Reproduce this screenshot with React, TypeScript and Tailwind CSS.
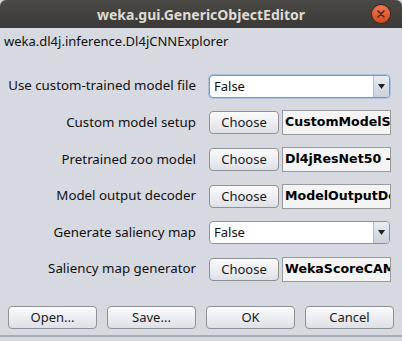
import React from 'react';

type Row =
  | { label: string; kind: 'combo'; value: string; focused?: boolean }
  | { label: string; kind: 'object'; value: string };

const ROWS: Row[] = [
  { label: 'Use custom-trained model file', kind: 'combo', value: 'False', focused: true },
  { label: 'Custom model setup', kind: 'object', value: 'CustomModelSetup' },
  { label: 'Pretrained zoo model', kind: 'object', value: 'Dl4jResNet50 -default' },
  { label: 'Model output decoder', kind: 'object', value: 'ModelOutputDecoder' },
  { label: 'Generate saliency map', kind: 'combo', value: 'False' },
  { label: 'Saliency map generator', kind: 'object', value: 'WekaScoreCAM' },
];

const uiFont = { fontFamily: '"Noto Sans", "DejaVu Sans", sans-serif' };

const Btn = ({ children, className = '' }: { children: React.ReactNode; className?: string }) => (
  <button
    type="button"
    className={`h-[23px] rounded-[4px] border border-[#8e9196] bg-gradient-to-b from-[#fbfbfc] to-[#dde0e5] text-[13px] text-[#1a1a1a] leading-none ${className}`}
  >
    {children}
  </button>
);

const Combo = ({ value, focused }: { value: string; focused?: boolean }) => (
  <div
    className={`flex h-[23px] w-[181px] items-stretch overflow-hidden rounded-[4px] border bg-white ${
      focused ? 'border-[#6f98c9] shadow-[0_0_0_1px_#a9c3e3]' : 'border-[#8e9196]'
    }`}
  >
    <div className="flex flex-1 items-center pl-[4px] text-[13px] text-[#111]">{value}</div>
    <div className="flex w-[16px] items-center justify-center border-l border-[#b8bcc2] bg-gradient-to-b from-[#e9edf2] to-[#c9d1db]">
      <svg width="7" height="5" viewBox="0 0 7 5">
        <path d="M0 0 H7 L3.5 5 Z" fill="#222" />
      </svg>
    </div>
  </div>
);

const App: React.FC = () => {
  return (
    <div className="h-[341px] w-[402px] overflow-hidden bg-[#d6d9df]" style={uiFont}>
      {/* title bar */}
      <div className="relative flex h-[28px] items-center justify-center rounded-t-[6px] bg-gradient-to-b from-[#4a4945] to-[#3b3a36]">
        <span className="text-[14px] font-bold text-[#dfdbd2]">weka.gui.GenericObjectEditor</span>
        <div className="absolute right-[12px] top-[5px] flex h-[18px] w-[18px] items-center justify-center rounded-full bg-gradient-to-b from-[#f0764a] to-[#d84a17] shadow-[0_0_0_1px_#3a2a22]">
          <svg width="8" height="8" viewBox="0 0 8 8">
            <path d="M1 1 L7 7 M7 1 L1 7" stroke="#3b2a22" strokeWidth="1.5" strokeLinecap="round" />
          </svg>
        </div>
      </div>

      <div className="px-[4px] pt-[4px] text-[13px] leading-[18px] text-[#111]">weka.dl4j.inference.Dl4jCNNExplorer</div>

      {/* properties */}
      <div className="mt-[18px] flex flex-col">
        {ROWS.map((r) => (
          <div key={r.label} className="flex h-[36.6px] items-center">
            <div className="w-[196px] text-right text-[13.3px] text-[#111]">{r.label}</div>
            <div className="ml-[13px] flex items-center">
              {r.kind === 'combo' ? (
                <Combo value={r.value} focused={r.focused} />
              ) : (
                <>
                  <Btn className="w-[70px]">Choose</Btn>
                  <div className="ml-[3px] flex h-[25px] w-[109px] items-center overflow-hidden whitespace-nowrap border border-[#9a9a9a] bg-[#f4f4f4] pl-[2px]">
                    <span className="text-[12.6px] font-bold text-black" style={{ fontFamily: '"DejaVu Sans", sans-serif' }}>
                      {r.value}
                    </span>
                  </div>
                </>
              )}
            </div>
          </div>
        ))}
      </div>

      {/* buttons */}
      <div className="mt-[18px] flex gap-[10px] px-[8px]">
        <Btn className="w-[89px]">Open...</Btn>
        <Btn className="w-[89px]">Save...</Btn>
        <Btn className="w-[89px]">OK</Btn>
        <Btn className="w-[89px]">Cancel</Btn>
      </div>
      <div className="mt-[6px] h-[2px] bg-[#a9adb3]" />
    </div>
  );
};

export default App;
